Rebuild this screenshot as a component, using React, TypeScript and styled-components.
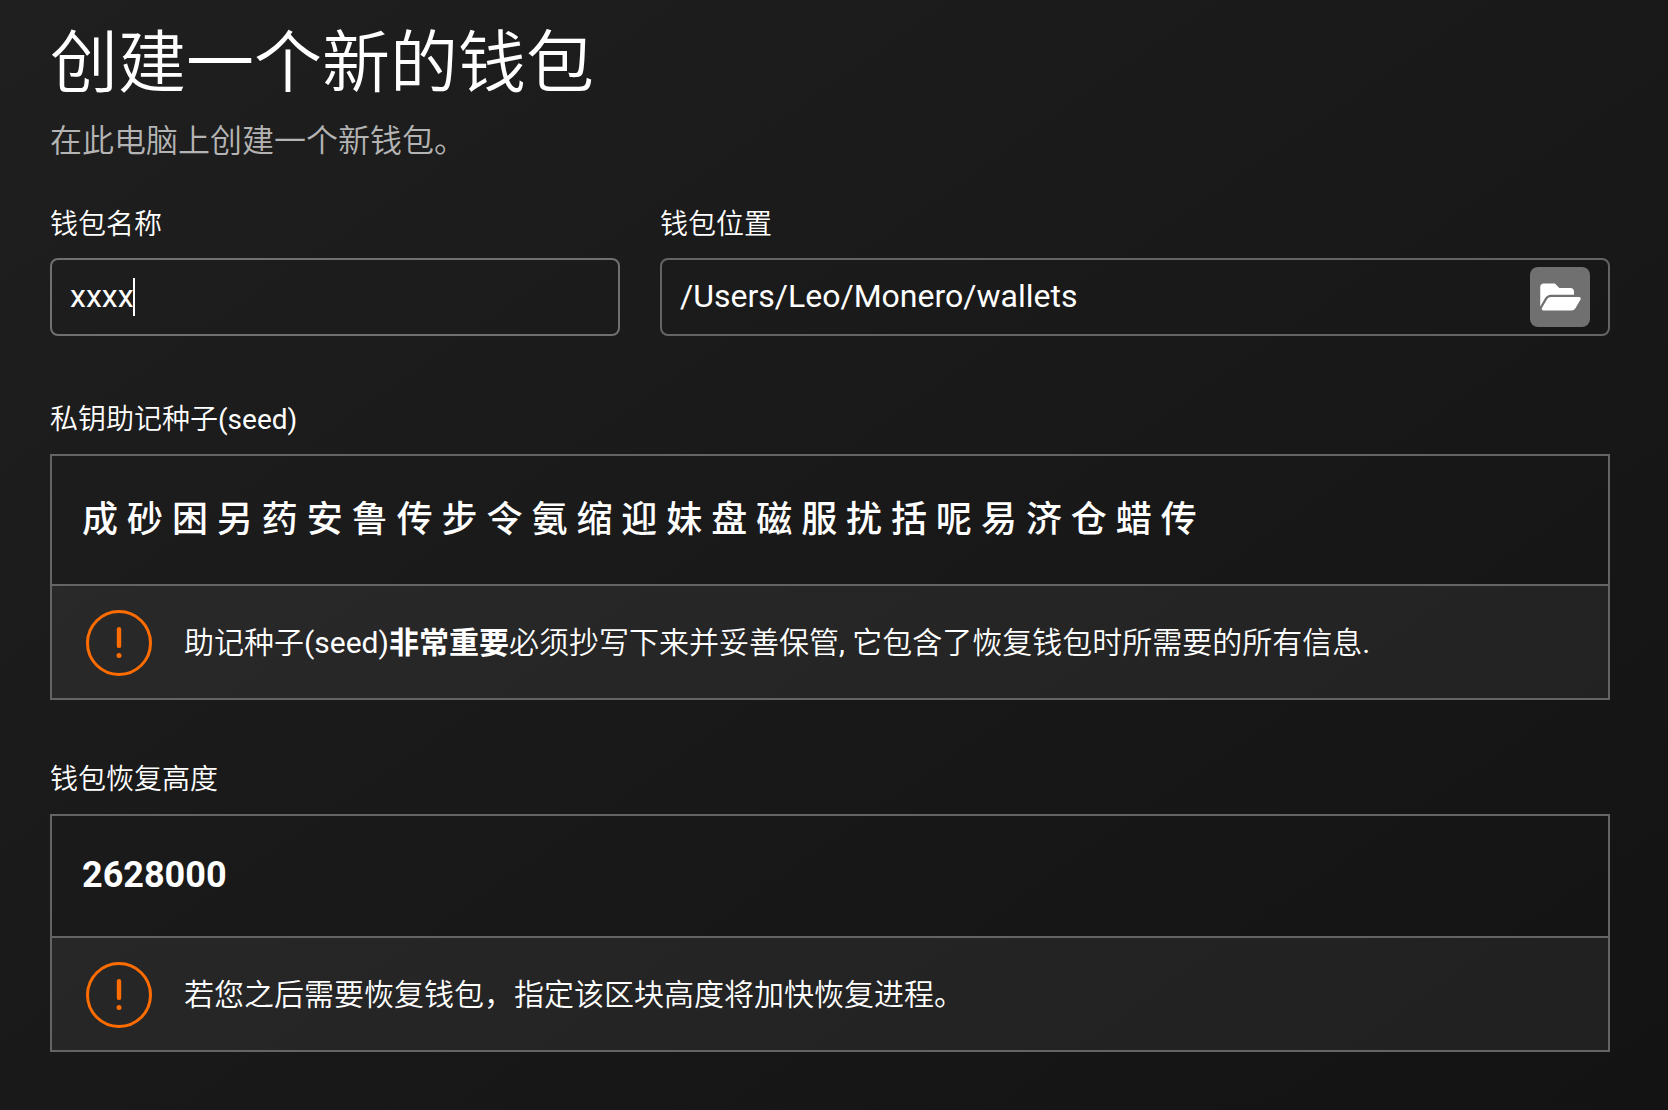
import React, { useState } from "react";
import styled, { createGlobalStyle } from "styled-components";
import { FaFolderOpen } from "react-icons/fa";

const GlobalStyle = createGlobalStyle`
  *, *::before, *::after {
    box-sizing: border-box;
  }

  body {
    margin: 0;
    min-height: 100vh;
    background: linear-gradient(145deg, #1f1f1f, #131313) #191919;
    color: #ffffff;
    font-family: Roboto, "Noto Sans CJK SC DemiLight", "Noto Sans CJK SC", sans-serif;
    font-weight: 400;
  }
`;

const Page = styled.main`
  padding: 24px 58px 48px 50px;
`;

const Title = styled.h1`
  margin: 0;
  font-size: 68px;
  font-weight: 400;
  line-height: 80px;
`;

const Subtitle = styled.p`
  margin: 13px 0 0;
  color: #b4b4b4;
  font-size: 32px;
  line-height: 48px;
`;

const FieldRow = styled.div`
  display: grid;
  grid-template-columns: 3fr 5fr;
  gap: 40px;
  margin-top: 40px;
`;

const Field = styled.div`
  display: flex;
  flex-direction: column;
  gap: 13px;
  min-width: 0;
`;

const Label = styled.label`
  font-size: 28px;
  line-height: 40px;
`;

const InputFrame = styled.div<{ $active?: boolean }>`
  display: flex;
  align-items: center;
  height: 78px;
  padding: 0 18px;
  border: 2px solid ${(p) => (p.$active ? "#707070" : "#646464")};
  border-radius: 8px;
`;

const TextInput = styled.input<{ $hug?: boolean }>`
  flex: ${(p) => (p.$hug ? "0 1 auto" : "1 1 0")};
  field-sizing: ${(p) => (p.$hug ? "content" : "fixed")};
  min-width: 0;
  padding: 0 0 2px;
  border: 0;
  outline: 0;
  background: transparent;
  color: inherit;
  caret-color: ${(p) => (p.$hug ? "transparent" : "auto")};
  font: inherit;
  font-size: 32px;
  line-height: 40px;
`;

const Caret = styled.span`
  flex: none;
  width: 2px;
  height: 38px;
  margin-left: -1px;
  background: #ffffff;
`;

const BrowseButton = styled.button`
  display: flex;
  align-items: center;
  justify-content: center;
  width: 60px;
  height: 60px;
  padding: 0;
  border: 0;
  border-radius: 8px;
  background: #707070;
  color: #ffffff;
  cursor: pointer;

  svg {
    width: 41px;
    height: 36px;
  }
`;

const Section = styled.section<{ $gap: number }>`
  display: flex;
  flex-direction: column;
  gap: 14px;
  margin-top: ${(p) => p.$gap}px;
`;

const SectionTitle = styled.h2`
  margin: 0;
  font-size: 28px;
  font-weight: 400;
  line-height: 40px;
`;

const Panel = styled.div`
  border: 2px solid #646464;
`;

const PanelValue = styled.div`
  padding: 39px 30px 41px;
  border-bottom: 2px solid #646464;
  font-size: 36px;
  font-weight: 700;
  line-height: 40px;
`;

const SeedValue = styled(PanelValue)`
  padding: 40px 30px;
  font-family: Roboto, "Noto Sans CJK SC Medium", "Noto Sans CJK SC", sans-serif;
  font-weight: 500;
  line-height: 48px;
`;

const Notice = styled.div`
  display: flex;
  align-items: center;
  gap: 32px;
  padding: 24px 34px 22px;
  background: rgba(255, 255, 255, 0.06);
`;

const NoticeText = styled.p`
  margin: 0;
  font-size: 30px;
  line-height: 40px;

  b {
    font-family: Roboto, "Noto Sans CJK SC", sans-serif;
  }
`;

const WarningSvg = styled.svg`
  flex: none;
  width: 66px;
  height: 66px;
`;

function WarningIcon() {
  return (
    <WarningSvg viewBox="0 0 66 66" fill="none" stroke="#ff6c00" aria-hidden="true">
      <circle cx="33" cy="33" r="31.5" strokeWidth="3" />
      <path d="M33 19.3v16.6" strokeWidth="4.4" strokeLinecap="round" />
      <circle cx="33" cy="45.6" r="2.5" fill="#ff6c00" stroke="none" />
    </WarningSvg>
  );
}

const SEED = "成 砂 困 另 药 安 鲁 传 步 令 氨 缩 迎 妹 盘 磁 服 扰 括 呢 易 济 仓 蜡 传";

export default function App() {
  const [name, setName] = useState("xxxx");
  const [location, setLocation] = useState("/Users/Leo/Monero/wallets");

  return (
    <>
      <GlobalStyle />
      <Page lang="zh-CN">
        <Title>创建一个新的钱包</Title>
        <Subtitle>在此电脑上创建一个新钱包。</Subtitle>

        <FieldRow>
          <Field>
            <Label htmlFor="wallet-name">钱包名称</Label>
            <InputFrame $active>
              <TextInput
                id="wallet-name"
                $hug
                value={name}
                onChange={(e) => setName(e.target.value)}
              />
              <Caret />
            </InputFrame>
          </Field>
          <Field>
            <Label htmlFor="wallet-location">钱包位置</Label>
            <InputFrame>
              <TextInput
                id="wallet-location"
                value={location}
                onChange={(e) => setLocation(e.target.value)}
              />
              <BrowseButton type="button" aria-label="钱包位置">
                <FaFolderOpen />
              </BrowseButton>
            </InputFrame>
          </Field>
        </FieldRow>

        <Section $gap={64}>
          <SectionTitle>私钥助记种子(seed)</SectionTitle>
          <Panel>
            <SeedValue>{SEED}</SeedValue>
            <Notice>
              <WarningIcon />
              <NoticeText>
                助记种子(seed)<b>非常重要</b>必须抄写下来并妥善保管, 它包含了恢复钱包时所需要的所有信息.
              </NoticeText>
            </Notice>
          </Panel>
        </Section>

        <Section $gap={60}>
          <SectionTitle>钱包恢复高度</SectionTitle>
          <Panel>
            <PanelValue>2628000</PanelValue>
            <Notice>
              <WarningIcon />
              <NoticeText>若您之后需要恢复钱包，指定该区块高度将加快恢复进程。</NoticeText>
            </Notice>
          </Panel>
        </Section>
      </Page>
    </>
  );
}
